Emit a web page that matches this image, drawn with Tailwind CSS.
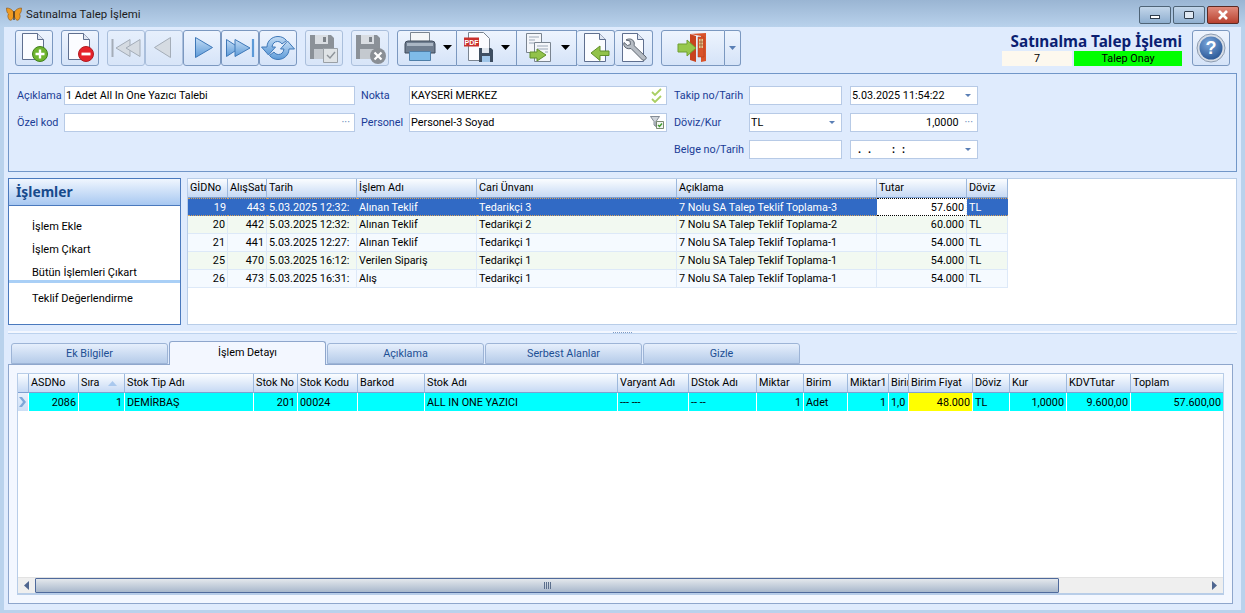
<!DOCTYPE html>
<html lang="tr">
<head>
<meta charset="UTF-8">
<title>Satınalma Talep İşlemi</title>
<script src="https://cdn.jsdelivr.net/npm/@tailwindcss/browser@4"></script>
</head>
<body class="w-[1245px] h-[613px] overflow-hidden bg-[#b9d2ec] text-black text-[10.800px] leading-none font-['Roboto',sans-serif]">

<!-- title bar -->
<div class="h-[27px] flex items-center bg-linear-to-b from-[#9ab5d3] to-[#b9d2ec]">
  <svg class="ml-[6px] mt-[3px]" width="16" height="16" viewBox="0 0 16 16"><path d="M7.500 5C6 2 3 1 .5 1c0 3 .5 5 2 6-1 1-1 4 1 6 2 1 3-1 4-3z" fill="#ef9a22" stroke="#8a5313" stroke-width=".6"/><path d="M8.500 5c1.500-3 4.500-4 7-4 0 3-.5 5-2 6 1 1 1 4-1 6-2 1-3-1-4-3z" fill="#ef9a22" stroke="#8a5313" stroke-width=".6"/><path d="M8 4v9" stroke="#3b2a12" stroke-width="1.200"/></svg>
  <span class="ml-[4px] mt-[3px] text-[11.400px] text-[#1c1c1c]">Satınalma Talep İşlemi</span>
  <div class="ml-auto mr-[6px] mt-[3px] flex gap-[2px]">
    <div class="w-[32px] h-[18px] rounded-[2px] border border-[#4f6477] bg-linear-to-b from-[#c3d6ea] to-[#8fafd0] flex items-center justify-center"><div class="w-[10px] h-[4px] mt-[3px] border border-[#2f3d4d] bg-white"></div></div>
    <div class="w-[32px] h-[18px] rounded-[2px] border border-[#4f6477] bg-linear-to-b from-[#c3d6ea] to-[#8fafd0] flex items-center justify-center"><div class="w-[10px] h-[8px] rounded-[1px] border-[1.500px] border-[#2f3d4d] bg-[#dfe8f2]"></div></div>
    <div class="w-[32px] h-[18px] rounded-[2px] border border-[#5c2a24] bg-linear-to-b from-[#e08a7c] to-[#b8402f] flex items-center justify-center">
      <svg width="12" height="10" viewBox="0 0 12 10"><path d="M2 1l8 8M10 1L2 9" stroke="#fff" stroke-width="2.600"/></svg>
    </div>
  </div>
</div>

<main class="ml-[4px] mr-[4px] h-[583px] bg-[#dfebfd] flex flex-col">

  <!-- toolbar -->
  <div class="mt-[3px] h-[36px] flex items-stretch pl-[11px]">
    <button class="w-[38px] rounded-[3px] border border-[#7b98c0] bg-linear-to-b from-[#eef4fe] to-[#d5e3f8]">
      <svg width="36" height="34" viewBox="0 0 36 34"><path d="M6.500 2.500h15l6 6v20h-21z" fill="#fbfcff" stroke="#5f6f8f"/><path d="M21.500 2.500v6h6" fill="#dfe6f2" stroke="#5f6f8f"/><circle cx="24" cy="23" r="7.500" fill="#6fb52e" stroke="#3f7f1e"/><path d="M24 18.500v9M19.500 23h9" stroke="#fff" stroke-width="2.400"/></svg>
    </button>
    <button class="ml-[8px] w-[38px] rounded-[3px] border border-[#7b98c0] bg-linear-to-b from-[#eef4fe] to-[#d5e3f8]">
      <svg width="36" height="34" viewBox="0 0 36 34"><path d="M6.500 2.500h15l6 6v20h-21z" fill="#fbfcff" stroke="#5f6f8f"/><path d="M21.500 2.500v6h6" fill="#dfe6f2" stroke="#5f6f8f"/><circle cx="24" cy="23" r="7.500" fill="#e5222a" stroke="#b21a20"/><path d="M19.500 23h9" stroke="#fff" stroke-width="2.800"/></svg>
    </button>
    <button class="ml-[8px] w-[38px] rounded-[3px] border border-[#aabfdc] bg-linear-to-b from-[#e6effc] to-[#d8e5f8]">
      <svg width="36" height="34" viewBox="0 0 36 34"><path d="M4.500 8v18" stroke="#a4adb8" stroke-width="2"/><path d="M8 17l14-8.500v17z" fill="#d5dbe2" stroke="#a4adb8"/><path d="M18 17l14-8.500v17z" fill="#d5dbe2" stroke="#a4adb8"/></svg>
    </button>
    <button class="w-[38px] rounded-[3px] border border-[#aabfdc] bg-linear-to-b from-[#e6effc] to-[#d8e5f8]">
      <svg width="36" height="34" viewBox="0 0 36 34"><path d="M8.500 16.500l16-10v20z" fill="#d5dbe2" stroke="#a4adb8"/></svg>
    </button>
    <button class="w-[38px] rounded-[3px] border border-[#7b98c0] bg-linear-to-b from-[#eef4fe] to-[#d5e3f8]">
      <svg width="36" height="34" viewBox="0 0 36 34"><defs><linearGradient id="bl" x1="0" y1="0" x2="0" y2="1"><stop offset="0" stop-color="#c5ddf5"/><stop offset="1" stop-color="#5c9ad8"/></linearGradient></defs><path d="M11.500 6.500l17 10-17 10z" fill="url(#bl)" stroke="#3e78b8"/></svg>
    </button>
    <button class="w-[38px] rounded-[3px] border border-[#7b98c0] bg-linear-to-b from-[#eef4fe] to-[#d5e3f8]">
      <svg width="36" height="34" viewBox="0 0 36 34"><path d="M4.500 8.500l13 8.500-13 8.500z" fill="url(#bl)" stroke="#3e78b8"/><path d="M13 8.500l15 8.500-15 8.500z" fill="url(#bl)" stroke="#3e78b8"/><path d="M31 8v18" stroke="#5c9ad8" stroke-width="2.200"/></svg>
    </button>
    <button class="w-[38px] rounded-[3px] border border-[#7b98c0] bg-linear-to-b from-[#eef4fe] to-[#d5e3f8]">
      <svg width="36" height="34" viewBox="0 0 36 34"><path d="M7 16c0-6 5-10.500 11-10.500 3.500 0 6.500 1.500 8.500 4l-4.500 3.500c-1-1.500-2.500-2.500-4.500-2.500-3 0-5 2-5.500 5.500h3.500L8.500 24 1.500 16z" fill="url(#bl)" stroke="#3e78b8"/><path d="M29 18c0 6-5 10.500-11 10.500-3.500 0-6.500-1.500-8.500-4l4.500-3.500c1 1.500 2.500 2.500 4.500 2.500 3 0 5-2 5.500-5.500h-3.500l7-8 7 8z" fill="url(#bl)" stroke="#3e78b8"/></svg>
    </button>
    <button class="ml-[8px] w-[38px] rounded-[3px] border border-[#aabfdc] bg-linear-to-b from-[#e6effc] to-[#d8e5f8]">
      <svg width="36" height="34" viewBox="0 0 36 34"><path d="M4 4h21l3 3v21H4z" fill="#8b9198"/><path d="M9 4h13v9H9z" fill="#d9dde2"/><path d="M17 6h3v5h-3z" fill="#7b8188"/><path d="M8 18h16v10H8z" fill="#c4c9cf"/><path d="M17.500 17.500h14v14h-14z" fill="#dfe3e6" stroke="#9aa0a6"/><path d="M21 24l3 3 5-6" fill="none" stroke="#8d9399" stroke-width="1.400"/></svg>
    </button>
    <button class="ml-[8px] w-[38px] rounded-[3px] border border-[#aabfdc] bg-linear-to-b from-[#e6effc] to-[#d8e5f8]">
      <svg width="36" height="34" viewBox="0 0 36 34"><path d="M4 4h21l3 3v21H4z" fill="#8b9198"/><path d="M9 4h13v9H9z" fill="#d9dde2"/><path d="M17 6h3v5h-3z" fill="#7b8188"/><path d="M8 18h16v10H8z" fill="#c4c9cf"/><circle cx="26" cy="25" r="8" fill="#8a8f95"/><path d="M22.500 21.500l7 7M29.500 21.500l-7 7" stroke="#fff" stroke-width="2.200"/></svg>
    </button>
    <button class="ml-[8px] w-[60px] rounded-l-[3px] border border-[#7b98c0] bg-linear-to-b from-[#eef4fe] to-[#d5e3f8]">
      <svg width="58" height="34" viewBox="0 0 58 34"><path d="M12.500 1.500h19v11h-19z" fill="#f4f6f8" stroke="#7a8490"/><path d="M10 10h24q3 0 3 3v9H7v-9q0-3 3-3z" fill="#6f7d8f" stroke="#3f4b5b"/><path d="M9 12h26v3H9z" fill="#aab6c4"/><path d="M11.500 20.500h21v9h-21z" fill="#7fbbe8" stroke="#4f7fa8"/><path d="M45 14h9l-4.500 5z" fill="#000"/></svg>
    </button>
    <button class="w-[60px] border border-l-0 border-[#7b98c0] bg-linear-to-b from-[#eef4fe] to-[#d5e3f8]">
      <svg width="59" height="34" viewBox="0 0 59 34"><path d="M11.500 1.500h15l6 6v22h-21z" fill="#fbfcff" stroke="#7a8490"/><path d="M7 6.500h15v9H7z" fill="#c9302c"/><text x="14.500" y="13.500" text-anchor="middle" font-family="Liberation Sans" font-weight="700" font-size="7" fill="#fff">PDF</text><path d="M22 17h12l2 2v12H22z" fill="#3d4d60"/><path d="M25 17h7v5h-7z" fill="#dfe5ec"/><path d="M25 25h8v6h-8z" fill="#9fc5e8"/><path d="M44 14h9l-4.500 5z" fill="#000"/></svg>
    </button>
    <button class="w-[60px] border border-l-0 border-[#7b98c0] bg-linear-to-b from-[#eef4fe] to-[#d5e3f8]">
      <svg width="59" height="34" viewBox="0 0 59 34"><path d="M9.500 2.500h15v19h-15z" fill="#f4f6fa" stroke="#7a8490"/><path d="M17.500 11.500h16v19h-16z" fill="#f4f6fa" stroke="#7a8490"/><path d="M12 6h10M12 9h6M12 12h5M20 15h11M20 18h11M28 21h3" stroke="#9aa6b6"/><path d="M13 21h7v-3l9 6-9 6v-3h-7z" fill="#92c24a" stroke="#5f8f2a"/><path d="M44 14h9l-4.500 5z" fill="#000"/></svg>
    </button>
    <button class="w-[38px] border border-l-0 border-[#7b98c0] rounded-[3px] bg-linear-to-b from-[#eef4fe] to-[#d5e3f8]">
      <svg width="37" height="34" viewBox="0 0 37 34"><path d="M7.500 2.500h15l6 6v22h-21z" fill="#fbfcff" stroke="#5f6f8f"/><path d="M22.500 2.500v6h6" fill="#dfe6f2" stroke="#5f6f8f"/><path d="M32 20h-9v-5L14 22l9 7.500v-5h9z" fill="#92c24a" stroke="#5f8f2a"/></svg>
    </button>
    <button class="w-[38px] border border-l-0 border-[#7b98c0] rounded-[3px] bg-linear-to-b from-[#eef4fe] to-[#d5e3f8]">
      <svg width="37" height="34" viewBox="0 0 37 34"><path d="M7.500 2.500h15l6 6v22h-21z" fill="#fbfcff" stroke="#5f6f8f"/><path d="M22.500 2.500v6h6" fill="#dfe6f2" stroke="#5f6f8f"/><path d="M11 9c3-2 7-1 8 2 .5 1.500.3 2.500 0 3.500L31 26c1 1.500-1.500 4-3.500 3L16 17.500c-3 .8-6-.3-7-3-.3-1-.3-2 0-3l3.500 3 3-1-.5-3.500z" fill="#b6bcc4" stroke="#5d6570"/></svg>
    </button>
    <button class="ml-[8px] w-[64px] rounded-l-[3px] border border-[#7b98c0] bg-linear-to-b from-[#eef4fe] to-[#d5e3f8]">
      <svg width="62" height="34" viewBox="0 0 62 34"><path d="M28 3l16-1v28l-5 1V5z" fill="#d9532a"/><path d="M28 3l6 2v26l-6-2z" fill="#c8431f"/><path d="M36 6h6v20h-6z" fill="#d9532a" stroke="#a8381a" stroke-width=".5"/><path d="M37 8h4v9h-4z" fill="#e6c58e"/><path d="M39 8v9M37 11h4M37 14h4" stroke="#9a4a20" stroke-width=".7"/><path d="M16 13h9V9l9 8-9 8v-4h-9z" fill="#96c84c" stroke="#6f9f30"/></svg>
    </button>
    <button class="w-[16px] rounded-r-[3px] border border-l-0 border-[#7b98c0] bg-linear-to-b from-[#eef4fe] to-[#d5e3f8] flex items-center justify-center">
      <svg width="7" height="4" viewBox="0 0 7 4"><path d="M0 0h7L3.500 4z" fill="#5a7fb5"/></svg>
    </button>

    <div class="ml-auto w-[180px] flex flex-col items-end">
      <div class="h-[21px] pt-[2px] flex items-center text-[15.300px] font-bold text-[#0b1f72] font-['Noto_Sans',sans-serif]">Satınalma Talep İşlemi</div>
      <div class="mt-auto flex h-[15px] w-[180px] text-center">
        <div class="w-[70px] pt-[2px] bg-[#fdf8ee] flex items-center justify-center">7</div>
        <div class="ml-[2px] w-[108px] pt-[2px] bg-[#00ff00] flex items-center justify-center">Talep Onay</div>
      </div>
    </div>
    <button class="ml-[10px] mr-[11px] w-[38px] rounded-[3px] border border-[#7b98c0] bg-linear-to-b from-[#eef4fe] to-[#d5e3f8]">
      <svg width="36" height="34" viewBox="0 0 36 34"><defs><radialGradient id="hb" cx=".4" cy=".3" r=".8"><stop offset="0" stop-color="#7ba7dc"/><stop offset="1" stop-color="#23508f"/></radialGradient></defs><circle cx="18" cy="17" r="14" fill="#d7dde6" stroke="#8d9cb0"/><circle cx="18" cy="17" r="11.500" fill="url(#hb)"/><text x="18" y="23" text-anchor="middle" font-family="Liberation Sans" font-weight="700" font-size="18" fill="#fff">?</text></svg>
    </button>
  </div>

  <!-- form panel -->
  <section class="mt-[7px] mx-[4px] h-[99px] border border-[#7196c8] pt-[12px] pl-[8px]">
    <div class="grid grid-cols-[47px_291px_54px_258px_82px_93px_136px] grid-rows-[19px_19px_19px] gap-y-[8px] text-[#1a3c96] whitespace-nowrap [&>label]:pt-[2px] [&>div]:pt-[2px]">
      <label class="flex items-center">Açıklama</label>
      <div class="border border-[#b7cae6] bg-white text-black flex items-center pl-[1px]">1 Adet All In One Yazıcı Talebi</div>
      <label class="pl-[6px] flex items-center">Nokta</label>
      <div class="border border-[#b7cae6] bg-white text-black flex items-center justify-between pl-[1px] pr-[3px]">KAYSERİ MERKEZ
        <svg class="-mt-[2px]" width="13" height="15" viewBox="0 0 13 15"><path d="M2 4l3 3 6-6M2 11l3 3 6-6" fill="none" stroke="#a9cf63" stroke-width="1.800"/></svg>
      </div>
      <label class="pl-[7px] flex items-center">Takip no/Tarih</label>
      <div class="border border-[#b7cae6] bg-white"></div>
      <div class="ml-[8px] border border-[#b7cae6] bg-white text-black flex items-center justify-between pl-[1px] pr-[6px]">5.03.2025 11:54:22
        <svg class="-mt-[2px]" width="6" height="3" viewBox="0 0 6 3"><path d="M0 0h6L3 3z" fill="#5a7fb5"/></svg>
      </div>

      <label class="flex items-center">Özel kod</label>
      <div class="border border-[#b7cae6] bg-white text-[#5a7fb5] flex items-center justify-end pr-[4px]">···</div>
      <label class="pl-[6px] flex items-center">Personel</label>
      <div class="border border-[#b7cae6] bg-white text-black flex items-center justify-between pl-[1px] pr-[2px]">Personel-3 Soyad
        <svg class="-mt-[2px]" width="14" height="15" viewBox="0 0 14 15"><path d="M.5 1.500h9L6 6.500v5l-2-1.500V6.500z" fill="#cfd4da" stroke="#6b7480" stroke-width=".8"/><path d="M6.500 6.500h7v7h-7z" fill="#f3f6f2" stroke="#5b6d50" stroke-width=".8"/><path d="M8 10l1.500 1.500L12 8.500" fill="none" stroke="#3f9a2c" stroke-width="1.400"/></svg>
      </div>
      <label class="pl-[7px] flex items-center">Döviz/Kur</label>
      <div class="border border-[#b7cae6] bg-white text-black flex items-center justify-between pl-[1px] pr-[6px]">TL
        <svg class="-mt-[2px]" width="6" height="3" viewBox="0 0 6 3"><path d="M0 0h6L3 3z" fill="#5a7fb5"/></svg>
      </div>
      <div class="ml-[8px] border border-[#b7cae6] bg-white text-black flex items-center justify-end pr-[4px]">1,0000<span class="ml-[6px] text-[#5a7fb5]">···</span></div>

      <div></div><div></div><div></div><div></div>
      <label class="pl-[7px] flex items-center">Belge no/Tarih</label>
      <div class="border border-[#b7cae6] bg-white"></div>
      <div class="ml-[8px] border border-[#b7cae6] bg-white text-black flex items-center justify-between pl-[7px] pr-[6px]">
        <span class="flex font-bold"><span class="w-[10px]">.</span><span class="w-[24px]">.</span><span class="w-[10px]">:</span><span>:</span></span>
        <svg class="-mt-[2px]" width="6" height="3" viewBox="0 0 6 3"><path d="M0 0h6L3 3z" fill="#5a7fb5"/></svg>
      </div>
    </div>
  </section>

  <!-- islemler + teklif grid -->
  <div class="mt-[6px] mx-[4px] h-[147px] flex gap-[6px]">
    <aside class="w-[173px] border border-[#4a79bd] bg-white flex flex-col text-[11px]">
      <div class="h-[27px] flex items-center pl-[7px] border-b border-[#4a79bd] bg-linear-to-b from-[#f0f6fe] to-[#a8c8f1] text-[13.800px] font-bold text-[#174a8c] font-['Noto_Sans',sans-serif]">İşlemler</div>
      <div class="h-[77px] pl-[23px] pt-[16px] flex flex-col gap-[13px] border-b-[3px] border-[#a9cff6]">
        <span class="leading-[10px]">İşlem Ekle</span>
        <span class="leading-[10px]">İşlem Çıkart</span>
        <span class="leading-[10px]">Bütün İşlemleri Çıkart</span>
      </div>
      <span class="pl-[23px] pt-[10px]">Teklif Değerlendirme</span>
    </aside>
    <div class="flex-1 border border-[#b8cde8] bg-white overflow-hidden">
      <table class="table-fixed w-[820px] border-separate border-spacing-0 [&_th]:h-[19px] [&_th]:pt-[1px] [&_th]:font-normal [&_th]:text-left [&_th]:px-[2px] [&_th]:border-r [&_th]:border-b [&_th]:border-r-[#9db8dc] [&_th]:border-b-[#7fa0d0] [&_th]:bg-linear-to-b [&_th]:from-[#fbfdff] [&_th]:to-[#c6d9f4] [&_th]:whitespace-nowrap [&_th]:overflow-hidden [&_td]:h-[18px] [&_td]:pt-[2px] [&_td]:px-[2px] [&_td]:border-r [&_td]:border-b [&_td]:border-[#dde9f8] [&_td]:whitespace-nowrap [&_td]:overflow-hidden">
        <colgroup><col class="w-[40px]"><col class="w-[39px]"><col class="w-[90px]"><col class="w-[120px]"><col class="w-[200px]"><col class="w-[200px]"><col class="w-[90px]"><col class="w-[41px]"></colgroup>
        <thead>
          <tr><th>GİDNo</th><th>AlışSatı:</th><th>Tarih</th><th>İşlem Adı</th><th>Cari Ünvanı</th><th>Açıklama</th><th>Tutar</th><th>Döviz</th></tr>
        </thead>
        <tbody>
          <tr class="bg-[#316ac5] text-white [&>td:not(.sel)]:!border-y [&>td:not(.sel)]:!border-dotted [&>td:not(.sel)]:!border-y-[#d9a45c] [&>td:not(.sel)]:!border-r-0"><td class="text-right">19</td><td class="text-right">443</td><td>5.03.2025 12:32:</td><td>Alınan Teklif</td><td>Tedarikçi 3</td><td>7 Nolu SA Talep Teklif Toplama-3</td><td class="sel text-right bg-white text-black !border-y !border-dotted !border-y-black">57.600</td><td>TL</td></tr>
          <tr class="bg-[#f2f9f1]"><td class="text-right">20</td><td class="text-right">442</td><td>5.03.2025 12:32:</td><td>Alınan Teklif</td><td>Tedarikçi 2</td><td>7 Nolu SA Talep Teklif Toplama-2</td><td class="text-right">60.000</td><td>TL</td></tr>
          <tr class="bg-[#f5faff]"><td class="text-right">21</td><td class="text-right">441</td><td>5.03.2025 12:27:</td><td>Alınan Teklif</td><td>Tedarikçi 1</td><td>7 Nolu SA Talep Teklif Toplama-1</td><td class="text-right">54.000</td><td>TL</td></tr>
          <tr class="bg-[#f2f9f1]"><td class="text-right">25</td><td class="text-right">470</td><td>5.03.2025 16:12:</td><td>Verilen Sipariş</td><td>Tedarikçi 1</td><td>7 Nolu SA Talep Teklif Toplama-1</td><td class="text-right">54.000</td><td>TL</td></tr>
          <tr class="bg-[#f5faff]"><td class="text-right">26</td><td class="text-right">473</td><td>5.03.2025 16:31:</td><td>Alış</td><td>Tedarikçi 1</td><td>7 Nolu SA Talep Teklif Toplama-1</td><td class="text-right">54.000</td><td>TL</td></tr>
        </tbody>
      </table>
    </div>
  </div>

  <!-- splitter -->
  <div class="mx-[4px] mt-[6px] h-[3px] bg-[#f3f7ff] border-b border-[#bcd2ee] flex justify-center items-center">
    <span class="w-[19px] h-[1px] border-t border-dotted border-[#7f9bc4]"></span>
  </div>

  <!-- tabs -->
  <div class="mt-[8px] h-[22px] pl-[7px] flex items-end gap-[1px] relative z-10">
    <div class="w-[157px] h-[21px] pt-[2px] rounded-t-[3px] border border-[#9db4d6] bg-linear-to-b from-[#e6effc] to-[#b5cbe9] text-[#1d4f94] flex items-center justify-center">Ek Bilgiler</div>
    <div class="w-[157px] h-[24px] -mb-px rounded-t-[3px] border border-b-0 border-[#8ea6cc] bg-[#f3f7ff] flex items-center justify-center">İşlem Detayı</div>
    <div class="w-[157px] h-[21px] pt-[2px] rounded-t-[3px] border border-[#9db4d6] bg-linear-to-b from-[#e6effc] to-[#b5cbe9] text-[#1d4f94] flex items-center justify-center">Açıklama</div>
    <div class="w-[157px] h-[21px] pt-[2px] rounded-t-[3px] border border-[#9db4d6] bg-linear-to-b from-[#e6effc] to-[#b5cbe9] text-[#1d4f94] flex items-center justify-center">Serbest Alanlar</div>
    <div class="w-[157px] h-[21px] pt-[2px] rounded-t-[3px] border border-[#9db4d6] bg-linear-to-b from-[#e6effc] to-[#b5cbe9] text-[#1d4f94] flex items-center justify-center">Gizle</div>
  </div>

  <!-- detail panel -->
  <section class="ml-[4px] w-[1225px] h-[240px] border border-[#8ea6cc] bg-[#f3f7ff] p-[8px]">
    <div class="h-full border border-[#b8cde8] bg-white flex flex-col">
      <div class="flex-1 overflow-hidden">
        <table class="table-fixed w-[1206px] border-separate border-spacing-0 [&_th]:h-[19px] [&_th]:pt-[1px] [&_th]:font-normal [&_th]:text-left [&_th]:px-[2px] [&_th]:border-r [&_th]:border-b [&_th]:border-r-[#9db8dc] [&_th]:border-b-[#7fa0d0] [&_th]:bg-linear-to-b [&_th]:from-[#fbfdff] [&_th]:to-[#c6d9f4] [&_th]:whitespace-nowrap [&_th]:overflow-hidden [&_td]:h-[18px] [&_td]:pt-[2px] [&_td]:px-[2px] [&_td]:border-r [&_td]:border-white [&_td]:bg-[#00ffff] [&_td]:whitespace-nowrap [&_td]:overflow-hidden">
          <colgroup><col class="w-[11px]"><col class="w-[50px]"><col class="w-[46px]"><col class="w-[129px]"><col class="w-[44px]"><col class="w-[60px]"><col class="w-[67px]"><col class="w-[193px]"><col class="w-[71px]"><col class="w-[68px]"><col class="w-[47px]"><col class="w-[44px]"><col class="w-[41px]"><col class="w-[20px]"><col class="w-[64px]"><col class="w-[37px]"><col class="w-[57px]"><col class="w-[64px]"><col class="w-[93px]"></colgroup>
          <thead>
            <tr><th></th><th>ASDNo</th><th><div class="flex items-center justify-between pr-[5px]">Sıra<svg width="9" height="5" viewBox="0 0 9 5"><path d="M4.500 0L9 5H0z" fill="#a9c8ee"/></svg></div></th><th>Stok Tip Adı</th><th>Stok No</th><th>Stok Kodu</th><th>Barkod</th><th>Stok Adı</th><th>Varyant Adı</th><th>DStok Adı</th><th>Miktar</th><th>Birim</th><th>Miktar1</th><th>Birim</th><th>Birim Fiyat</th><th>Döviz</th><th>Kur</th><th>KDVTutar</th><th>Toplam</th></tr>
          </thead>
          <tbody>
            <tr>
              <td class="!bg-linear-to-b !from-[#e8f0fc] !to-[#cddef5] !p-0"><svg width="9" height="10" viewBox="0 0 9 10"><path d="M1 0h3l4 5-4 5H1l4-5z" fill="#7ea7d8"/></svg></td>
              <td class="text-right">2086</td><td class="text-right">1</td><td>DEMİRBAŞ</td><td class="text-right">201</td><td>00024</td><td></td><td>ALL IN ONE YAZICI</td><td>--- ---</td><td>-- --</td><td class="text-right">1</td><td>Adet</td><td class="text-right">1</td><td>1,0</td><td class="text-right !bg-[#ffff00]">48.000</td><td>TL</td><td class="text-right">1,0000</td><td class="text-right">9.600,00</td><td class="text-right">57.600,00</td>
            </tr>
          </tbody>
        </table>
      </div>
      <!-- scrollbar -->
      <div class="h-[17px] flex items-stretch bg-[#efefef] border-t border-[#e2e2e2] border-b border-b-[#b8cde8]">
        <div class="w-[17px] flex items-center justify-center"><svg width="5" height="9" viewBox="0 0 5 9"><path d="M5 0v9L0 4.500z" fill="#4f6690"/></svg></div>
        <div class="w-[1024px] rounded-[1px] border border-[#4f6a9c] bg-linear-to-b from-[#e4e8ec] to-[#a9b8cc] flex items-center justify-center">
          <div class="w-[7px] h-[7px] bg-[repeating-linear-gradient(90deg,#5b6f8c_0_1px,transparent_1px_2px)]"></div>
        </div>
        <div class="ml-auto w-[17px] flex items-center justify-center"><svg width="5" height="9" viewBox="0 0 5 9"><path d="M0 0v9l5-4.500z" fill="#4f6690"/></svg></div>
      </div>
    </div>
  </section>
</main>
</body>
</html>
